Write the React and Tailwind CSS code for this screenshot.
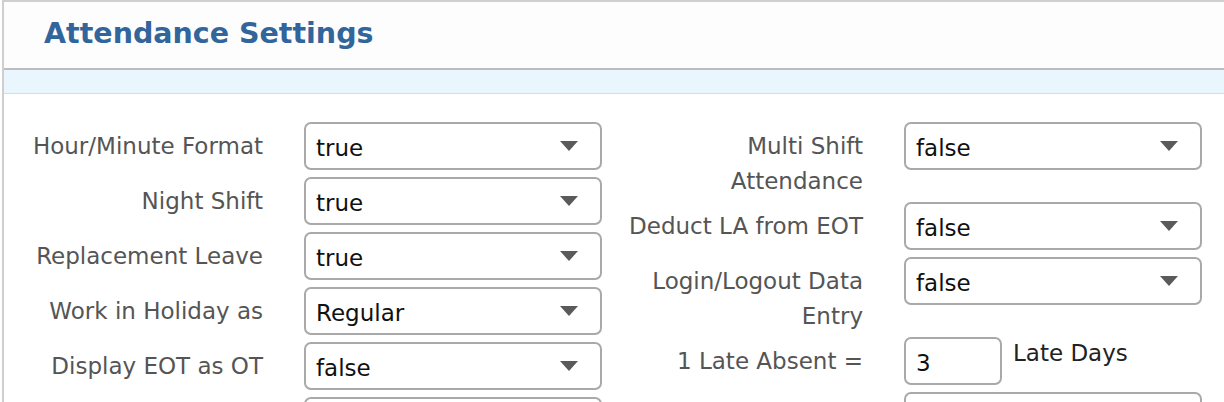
import React from "react";

const leftRows = [
  { label: "Hour/Minute Format", value: "true" },
  { label: "Night Shift", value: "true" },
  { label: "Replacement Leave", value: "true" },
  { label: "Work in Holiday as", value: "Regular" },
  { label: "Display EOT as OT", value: "false" },
  { label: "", value: "" },
];

const rightRows = [
  { label: "Multi Shift Attendance", value: "false" },
  { label: "Deduct LA from EOT", value: "false" },
  { label: "Login/Logout Data Entry", value: "false" },
  { label: "1 Late Absent =", input: "3", suffix: "Late Days" },
  { label: "", value: "" },
];

function Caret() {
  return (
    <svg width="18" height="10" viewBox="0 0 18 10" className="shrink-0">
      <path d="M0 0 H18 L9 10 Z" fill="#5a5a5a" />
    </svg>
  );
}

function Select({ value }) {
  return (
    <div className="w-[298px] h-[48px] border-2 border-[#a9a9a9] rounded-[7px] bg-white flex items-center justify-between pl-[10px] pr-[22px]">
      <span className="text-[23px] text-[#111] pt-[5px]">{value}</span>
      <Caret />
    </div>
  );
}

function Row({ row, index }) {
  return (
    <div className="flex items-start">
      <div className="w-[259px] shrink-0 flex justify-end">
        <div className="max-w-[240px] min-h-[35px] text-right text-[23px] leading-[35px] text-[#555] pt-[7px] pb-[3px]">
          {row.label}
        </div>
      </div>
      <div className="ml-[41px] pb-[7px] flex items-start">
        {row.input ? (
          <>
            <div className="w-[98px] h-[48px] border-2 border-[#a9a9a9] rounded-[7px] bg-white flex items-center pl-[10px]">
              <span className="text-[23px] text-[#111] pt-[5px]">{row.input}</span>
            </div>
            <span className="ml-[11px] text-[23px] leading-[32px] text-[#222]">{row.suffix}</span>
          </>
        ) : (
          <Select value={row.value} />
        )}
      </div>
    </div>
  );
}

export default function App() {
  return (
    <div className="w-[1224px] h-[402px] overflow-hidden bg-white font-['DejaVu_Sans',sans-serif]">
      <div className="ml-[2px] border-l-2 border-t-2 border-[#cfcfcf] h-full">
        <div className="h-[68px] bg-[#fdfdfd] border-b-2 border-[#bdbdbd] flex items-center pl-[40px]">
          <h1 className="text-[28.5px] font-bold text-[#31659b] pb-[2px]">Attendance Settings</h1>
        </div>
        <div className="h-[24px] bg-[#eaf6fd] border-b border-[#dcdcdc]" />
        <div className="pt-[28px] flex">
          <div className="w-[600px] flex flex-col">
            {leftRows.map((r, i) => (
              <Row key={i} row={r} />
            ))}
          </div>
          <div className="w-[600px] flex flex-col">
            {rightRows.map((r, i) => (
              <Row key={i} row={r} />
            ))}
          </div>
        </div>
      </div>
    </div>
  );
}
